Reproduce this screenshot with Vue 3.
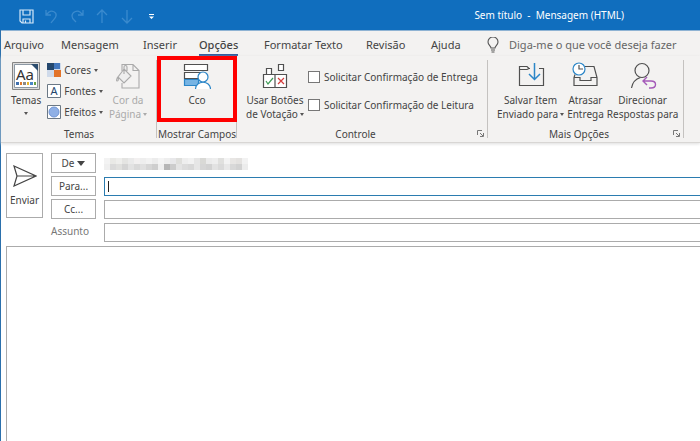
<script setup>
import { ref } from 'vue'

const tabs = ['Arquivo', 'Mensagem', 'Inserir', 'Opções', 'Formatar Texto', 'Revisão', 'Ajuda']
const active = ref('Opções')
const delivery = ref(false)
const read = ref(false)
const to = ref('')
const cc = ref('')
const subject = ref('')
const body = ref('')

const shades = [
  ['f3f3f3', 'e9e9e6', 'eeeeec', 'e4e4e2', 'eaeaea', 'f2f0f0', 'eeeeee', 'f2f2f2', 'ececec', 'f4f4f4', 'eeeeee', 'e8e8ea', 'dfdfdc', 'eeeeee', 'f2f2f2', 'e6e6e6', 'd9d9d6', 'ebebeb', 'eeeeee', 'e0e0de', 'f3f3f3', 'e8e6e4', 'e4e2e0', 'f2f2f2'],
  ['efefef', 'dadada', 'e0e0de', 'd4d4d4', 'e2e2e2', 'd9d9d9', 'e0e0e0', 'd6d6d6', 'cecece', 'efefef', 'b6b6b6', 'cccccc', 'e4e4e4', 'dcdcdc', 'd8d8d8', 'e6e6e6', 'd6d6d6', 'd2d2d2', 'e2e2e2', 'dadada', 'e8e8e8', 'd8d8d8', 'd2d2d2', 'ececec'],
]
</script>

<template>
  <div class="window">
    <header class="titlebar">
      <div class="quick">
        <button class="plain" aria-label="Salvar">
          <svg width="15" height="15" viewBox="0 0 15 15" fill="none" stroke="#d5e8f8" stroke-width="1.2"><path d="M1 1h13v13H3l-2-2zM4 1v5h7V1M4 14v-4h7v4M6.500 14v-2.500" /></svg>
        </button>
        <button class="plain" aria-label="Desfazer">
          <svg width="15" height="15" viewBox="0 0 15 15" fill="none" stroke="#3a8ace" stroke-width="1.3"><path d="M2 1v5h5M2 6l3-3c3-2 8 0 7 4c0 2-3 4-5 7" /></svg>
        </button>
        <button class="plain" aria-label="Refazer">
          <svg width="15" height="15" viewBox="0 0 15 15" fill="none" stroke="#3a8ace" stroke-width="1.3"><path d="M14 1v5H9M14 6l-3-3c-3-2-8 0-8 4c0 3 2 4 4 6" /></svg>
        </button>
        <button class="plain" aria-label="Item anterior">
          <svg width="15" height="15" viewBox="0 0 15 15" fill="none" stroke="#3a8ace" stroke-width="1.3"><path d="M8 14V1M3 6l5-5l5 5" /></svg>
        </button>
        <button class="plain" aria-label="Próximo item">
          <svg width="15" height="15" viewBox="0 0 15 15" fill="none" stroke="#3a8ace" stroke-width="1.3"><path d="M8 1v13M3 9l5 5l5-5" /></svg>
        </button>
        <button class="plain" aria-label="Personalizar">
          <svg width="15" height="15" viewBox="0 0 15 15" fill="#fff"><path d="M5 5h5v1H5zM5 7.500h5L7.500 10z" /></svg>
        </button>
      </div>
      <h1 class="title">Sem título&nbsp; -&nbsp; Mensagem (HTML)</h1>
    </header>

    <div class="frame">
      <nav class="tabs">
        <button v-for="t in tabs" :key="t" class="tab" :class="{ active: t === active }" @click="active = t"><span>{{ t }}</span></button>
        <button class="tell">
          <svg width="12" height="16" viewBox="0 0 12 16" fill="none" stroke="#555" stroke-width="1.1"><path d="M4 11c0-2-3-3-3-6a5 5 0 0 1 10 0c0 3-3 4-3 6zM4 13h4M4.500 15h3" /></svg>
          Diga-me o que você deseja fazer
        </button>
      </nav>

      <div class="ribbon">
        <section class="group themes">
          <div class="tools">
            <button class="big">
              <svg width="28" height="28" viewBox="0 0 28 28"><path d="M.5.500h27v27H.5z" fill="#dcdcdc" stroke="#858585" /><path d="M2.500 2.500h18l5 5v18h-23z" fill="#fff" stroke="#8c98a4" /><path d="M19 2h7v7z" fill="#2b4c6e" /><text x="4" y="18" class="aa">Aa</text><path d="M4 20h3v3H4z" fill="#3f6fae" /><path d="M8 20h2v3H8z" fill="#e07b2e" /><path d="M11 20h3v3h-3z" fill="#8a8a8a" /><path d="M15 20h2v3h-2z" fill="#e8b52a" /><path d="M18 20h3v3h-3z" fill="#4a87c8" /><path d="M22 20h2v3h-2z" fill="#67a346" /></svg>
              <span>Temas</span><i class="caret"></i>
            </button>
            <div class="stack">
              <button class="small">
                <svg width="14" height="14" viewBox="0 0 14 14"><path d="M0 0h7v7H0z" fill="#24476d" /><path d="M7 0h7v7H7z" fill="#cfdaea" /><path d="M0 7h7v7H0z" fill="#4377bd" /><path d="M7 7h7v7H7z" fill="#e2732a" /><path d="M0 7h7v7H0z" fill="#cfdaea" /><path d="M7 0h6v6H7z" fill="#4377bd" /></svg>
                Cores<i class="caret"></i>
              </button>
              <button class="small">
                <svg width="14" height="14" viewBox="0 0 14 14"><path d="M.5.500h13v13H.5z" fill="#fff" stroke="#6b7885" /><text x="7" y="11" text-anchor="middle" class="a">A</text></svg>
                Fontes<i class="caret"></i>
              </button>
              <button class="small">
                <svg width="14" height="14" viewBox="0 0 14 14"><path d="M.5.500h13v13H.5z" fill="#fff" stroke="#6b7885" /><circle cx="7" cy="7" r="5" fill="#8fb0e6" stroke="#6f94d4" /></svg>
                Efeitos<i class="caret"></i>
              </button>
            </div>
            <button class="big dim" disabled>
              <svg width="28" height="28" viewBox="0 0 28 28" fill="none" stroke="#aaa" stroke-width="1.1"><path d="M8 9V2.500h11l6 6V26H8v-5M19 2.500v6h6" /><path d="M10 7l7 7l-7 7l-6-6zM10 12V5c0-2 3-2 3 0v4M4 15c-1 1-2 4-1 4s2-1 1-4" fill="#eee" /></svg>
              <span>Cor da</span><span>Página<i class="caret"></i></span>
            </button>
          </div>
          <h2>Temas</h2>
        </section>

        <section class="group fields">
          <div class="tools">
            <button class="big">
              <svg width="28" height="28" viewBox="0 0 28 28" fill="#fff" stroke="#505050" stroke-width="1.2"><path d="M1.500 2.500h23v6h-23zM1.500 10.500h20v6h-20z" /><path d="M1.500 17.500h14v6h-14z" fill="#76b4e4" stroke="#2b86c8" /><circle cx="20" cy="15" r="5" stroke="#2b86c8" /><path d="M12.500 27c0-9 15-9 15 0" stroke="#2b86c8" /></svg>
              <span>Cco</span>
            </button>
          </div>
          <h2>Mostrar Campos</h2>
          <div class="highlight"></div>
        </section>

        <section class="group control">
          <div class="tools">
            <button class="big">
              <svg width="28" height="28" viewBox="0 0 28 28" fill="#fff" stroke="#505050" stroke-width="1.2"><path d="M5.500 6.500h5v6h-5zM17.500 2.500h5v6h-5zM2.500 12.500h11.500v13H2.500zM14 12.500h11.500v13H14z" /><path d="M5 19l2 3l5-6" fill="none" stroke="#3f9c57" /><path d="M17 16l6 6M23 16l-6 6" stroke="#d43c3c" /></svg>
              <span>Usar Botões</span><span>de Votação<i class="caret"></i></span>
            </button>
            <div class="checks">
              <label><input v-model="delivery" type="checkbox">Solicitar Confirmação de Entrega</label>
              <label><input v-model="read" type="checkbox">Solicitar Confirmação de Leitura</label>
            </div>
          </div>
          <h2>Controle</h2>
          <button class="launcher" aria-label="Opções de controle"><svg width="7" height="7" viewBox="0 0 7 7" fill="none" stroke="#777"><path d="M.5 5V.500H5M3 3l3 3M6.500 3v3.500H3" /></svg></button>
        </section>

        <section class="group more">
          <div class="tools">
            <button class="big">
              <svg width="28" height="28" viewBox="0 0 28 28" fill="none" stroke="#505050" stroke-width="1.2"><path d="M13 6.500H12l-2-2H2.500v19h24v-17H22M2.500 7.500H10l2-1" /><path d="M17.500 1v16M12 12l5.500 5.500L23 12" stroke="#2b86c8" stroke-width="1.500" /></svg>
              <span>Salvar Item</span><span>Enviado para<i class="caret"></i></span>
            </button>
            <button class="big">
              <svg width="28" height="28" viewBox="0 0 28 28" fill="none" stroke="#505050" stroke-width="1.2"><path d="M14 4.500h9l3 11v8H3v-8l1-3M3 15.500h6v3h11v-3h6" /><circle cx="8" cy="7" r="6" fill="#fff" stroke="#2b86c8" /><path d="M8 3v4h4" /></svg>
              <span>Atrasar</span><span>Entrega</span>
            </button>
            <button class="big">
              <svg width="28" height="28" viewBox="0 0 28 28" fill="none" stroke="#505050" stroke-width="1.2"><circle cx="13" cy="8.500" r="7" /><path d="M2.500 26c1-6 4-9 9-10.500" /><path d="M18 15l-4 4l4 4M14 19h8c6 0 6 7 0 7h-2" stroke="#a45ab8" stroke-width="1.400" /></svg>
              <span>Direcionar</span><span>Respostas para</span>
            </button>
          </div>
          <h2>Mais Opções</h2>
          <button class="launcher" aria-label="Mais opções"><svg width="7" height="7" viewBox="0 0 7 7" fill="none" stroke="#777"><path d="M.5 5V.500H5M3 3l3 3M6.500 3v3.500H3" /></svg></button>
        </section>
      </div>

      <main class="compose">
        <div class="head">
          <button class="send">
            <svg width="24" height="22" viewBox="0 0 24 22" fill="none" stroke="#444" stroke-width="1.2"><path d="M1 1l22 10L1 21l3-10zM4 11h19" /></svg>
            Enviar
          </button>
          <div class="labels">
            <button class="pick">De<i class="drop"></i></button>
            <button class="pick">Para...</button>
            <button class="pick">Cc...</button>
            <label for="subject">Assunto</label>
          </div>
          <div class="inputs">
            <svg class="sender" width="144" height="12" viewBox="0 0 144 12" role="img" aria-label="Remetente oculto">
              <g v-for="(row, r) in shades" :key="r"><rect v-for="(s, i) in row" :key="i" :x="i * 6" :y="r * 6" width="6" height="6" :fill="'#' + s" /></g>
            </svg>
            <div class="field focus"><i class="cursor"></i><input v-model="to" aria-label="Para"></div>
            <div class="field"><input v-model="cc" aria-label="Cc"></div>
            <div class="field"><input id="subject" v-model="subject"></div>
          </div>
        </div>
        <textarea v-model="body" class="body" aria-label="Mensagem"></textarea>
      </main>
    </div>
  </div>
</template>

<style>
body { background: #fff; }
</style>

<style scoped>
.window { display: flex; flex-direction: column; min-height: 100vh; font-family: "Noto Sans", "Open Sans", sans-serif; font-size: 10px; line-height: 14px; color: #444; overflow: hidden; }
button { font: inherit; color: inherit; background: none; border: 0; padding: 0; margin: 0; white-space: nowrap; }
svg { display: block; flex: none; }
h1, h2 { margin: 0; font-weight: 400; }
.titlebar { display: flex; align-items: center; justify-content: space-between; height: 30px; padding-right: 76px; background: #106ebe; color: #fff; }
.quick { display: flex; gap: 10px; padding: 2px 0 0 19px; }
.title { font-size: 10px; line-height: 14px; white-space: nowrap; }
.frame { flex: 1; display: flex; flex-direction: column; border-left: 1px solid #2b70ac; }
.tabs { display: grid; grid-template-columns: 57px 82px 56px 65px 102px 65px 56px 1fr; padding-left: 3px; height: 26px; background: #f3f2f1; border-top: 1px solid #8fb3d3; box-sizing: border-box; font-size: 11px; }
.tab { text-align: left; }
.tab span { display: inline-block; line-height: 18px; padding-top: 4px; border-bottom: 2px solid transparent; }
.tab.active span { border-color: #2b579a; font-weight: 500; }
.tell { display: flex; align-items: center; gap: 10px; padding-top: 2px; color: #666; }
.ribbon { display: flex; height: 86px; background: #f3f2f1; border-bottom: 1px solid #d8d6d4; box-shadow: 0 1px 3px #ddd; }
.group { position: relative; display: flex; flex-direction: column; box-sizing: border-box; }
.group::after { content: ""; position: absolute; right: 0; top: 4px; bottom: 4px; border-right: 1px solid #c4c2c0; }
.group h2 { font-size: 10px; line-height: 14px; text-align: center; white-space: nowrap; margin-top: auto; padding-bottom: 1px; }
.themes { width: 156px; }
.fields { width: 80px; }
.control { width: 251px; }
.more { width: 196px; }
.control h2, .more h2 { padding-right: 14px; }
.tools { display: flex; padding-top: 6px; }
.big { display: flex; flex-direction: column; align-items: center; }
.big svg { margin-bottom: 3px; }
.caret { display: inline-block; border: 2px solid transparent; border-top: 3px solid #555; border-bottom: 0; margin-left: 2px; vertical-align: 2px; }
.big > .caret { margin: 5px 0 0; }
.themes .tools { gap: 6px; padding-left: 10px; }
.dim { color: #aaa; }
.dim .caret { border-top-color: #aaa; }
.aa { font-size: 15px; fill: #333; }
.a { font-size: 11px; fill: #24476d; }
.stack { display: flex; flex-direction: column; gap: 7px; padding-top: 1px; }
.small { display: flex; align-items: center; gap: 3px; }
.small .caret { margin: 0; }
.fields .tools { justify-content: center; }
.highlight { position: absolute; inset: 0 0 20px 0; border: 4px solid #f00; z-index: 1; pointer-events: none; }
.control .tools { gap: 4px; padding-left: 9px; }
.checks { display: flex; flex-direction: column; gap: 14px; padding-top: 8px; }
.checks label { display: flex; align-items: center; gap: 4px; white-space: nowrap; }
.checks input { appearance: none; box-sizing: border-box; width: 12px; height: 12px; margin: 0; border: 1px solid #777; background: #fff; }
.launcher { position: absolute; right: 4px; bottom: 5px; }
.more .tools { gap: 3px; padding-left: 9px; }
.compose { flex: 1; display: flex; flex-direction: column; padding: 10px 0 0 5px; }
.head { display: flex; gap: 8px; }
.send { display: flex; flex-direction: column; align-items: center; justify-content: center; gap: 6px; width: 37px; height: 65px; border: 1px solid #ababab; }
.labels { display: grid; grid-template-rows: repeat(3, 20px) 20px; gap: 3px; width: 45px; color: #444; }
.labels label { padding-top: 2px; color: #777; }
.pick { display: flex; align-items: center; justify-content: center; gap: 3px; border: 1px solid #ababab; }
.drop { border: 4px solid transparent; border-top: 5px solid #444; border-bottom: 0; }
.inputs { flex: 1; display: grid; grid-template-rows: repeat(4, 19px); gap: 4px; padding-top: 1px; }
.sender { align-self: center; }
.field { display: flex; align-items: center; border: 1px solid #ababab; border-right: 0; }
.focus { border-color: #2b7cb0; }
.field input { flex: 1; min-width: 0; border: 0; outline: 0; padding: 0 3px; font: inherit; background: none; }
.cursor { height: 11px; margin-left: 3px; border-left: 1px solid #222; }
.body { flex: 1; margin-top: 4px; border: 1px solid #ababab; border-width: 1px 0 0 1px; outline: 0; resize: none; }
</style>
